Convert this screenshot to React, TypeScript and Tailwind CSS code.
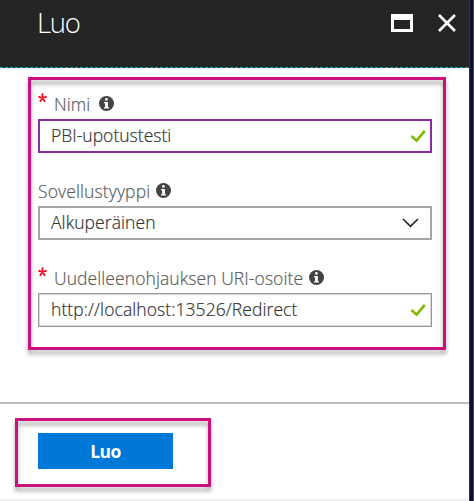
import React from "react";

function Info() {
  return (
    <svg className="block h-[15px] w-[15px] shrink-0" viewBox="0 0 15 15">
      <circle cx="7.5" cy="7.5" r="7.5" fill="#444444" />
      <circle cx="7.4" cy="3.4" r="1.4" fill="#fff" />
      <path d="M5 6h3.9v5.2H10v1.3H5v-1.3h1.1V7.3H5z" fill="#fff" />
    </svg>
  );
}

function Check() {
  return (
    <svg className="block h-[14px] w-[16px] shrink-0" viewBox="0 0 16 14">
      <path d="M1.4 7L6.6 11.6L14.8 1.8" fill="none" stroke="#7fba00" strokeWidth="2.6" />
    </svg>
  );
}

function Star() {
  return (
    <svg className="block h-[10px] w-[9px] shrink-0" viewBox="0 0 9 10">
      <path d="M4.5 0.2V5M0.3 3.6L4.5 5L8.7 3.6M1.9 8.7L4.5 5L7.1 8.7" fill="none" stroke="#e81123" strokeWidth="1.8" />
    </svg>
  );
}

export default function App() {
  return (
    <div className="relative flex h-[501px] w-[474px] overflow-hidden bg-white font-['Open_Sans','Noto_Sans',sans-serif] text-[17.5px] leading-6">
      <div className="flex w-[469px] flex-col">
        <header className="flex h-[67px] shrink-0 items-start bg-[#252525] pl-[37px] text-white">
          <h1 className="mt-[4px] w-[353px] text-[27.5px] leading-[38px] font-light tracking-[-1.3px]">Luo</h1>
          <svg className="mt-[14px] mr-[25px] ml-[1px] block h-[18px] w-[22px]" viewBox="0 0 22 18">
            <path d="M0 0H22V18H0zM3 6V15H19V6z" fill="#fff" fillRule="evenodd" />
          </svg>
          <svg className="mt-[14px] block h-[18px] w-[18px]" viewBox="0 0 18 18">
            <path d="M1 1L17 17M17 1L1 17" stroke="#fff" strokeWidth="2.6" />
          </svg>
        </header>
        <div className="h-px shrink-0 bg-[repeating-linear-gradient(90deg,#159fd0_0_3px,#252525_3px_5px)]" />

        <main className="flex h-[334px] shrink-0 flex-col pl-[38px] font-light text-[#5c5c5c] [-webkit-text-stroke:0.2px]">
          <label className="mt-[24px] flex h-[24px]">
            <span className="pt-[1px]"><Star /></span>
            <span className="ml-[7px] w-[45px] tracking-[0.1px]">Nimi</span>
            <span className="pt-[4px]"><Info /></span>
          </label>
          <div className="mt-[3px] flex h-[34px] w-[394px] items-center justify-between border-2 border-[#8a2da5] pr-[4px] pl-[11px] text-[#333333]">
            <span className="-mt-[3px] tracking-[0.02px]">PBI-upotustesti</span>
            <Check />
          </div>
          <label className="mt-[26px] flex h-[24px]">
            <span className="w-[118px] tracking-[0.12px]">Sovellustyyppi</span>
            <span className="pt-[4px]"><Info /></span>
          </label>
          <div className="mt-[3px] flex h-[34px] w-[394px] items-center justify-between border-2 border-[#a6a6a6] pr-[11px] pl-[11px] text-[#333333]">
            <span className="-mt-[3px] tracking-[0.08px]">Alkuperäinen</span>
            <svg className="block h-[10px] w-[17px]" viewBox="0 0 17 10">
              <path d="M1 1L8.5 8.4L16 1" fill="none" stroke="#222" strokeWidth="1.6" />
            </svg>
          </div>
          <label className="mt-[26px] flex h-[24px]">
            <span className="pt-[1px]"><Star /></span>
            <span className="ml-[7px] w-[255px] tracking-[0.08px] whitespace-nowrap">Uudelleenohjauksen URI-osoite</span>
            <span className="pt-[4px]"><Info /></span>
          </label>
          <div className="mt-[3px] flex h-[34px] w-[394px] items-center justify-between border border-[#999999] pr-[5px] pl-[12px] text-[#333333] shadow-[inset_0_0_0_1px_#d8d8d8]">
            <span className="-mt-[3px] tracking-[0.08px]">http://localhost:13526/Redirect</span>
            <Check />
          </div>
        </main>

        <footer className="h-[99px] border-t-2 border-b-2 border-t-[#bbbbbb] border-b-[#f0f0f0] pt-[29px] pl-[38px]">
          <button className="block h-[36px] w-[135px] bg-[#0078d7] font-bold tracking-[-0.6px] text-white">Luo</button>
        </footer>
      </div>
      <div className="w-px bg-[#960a10]" />
      <div className="w-[3px] bg-[#0b1230]" />
      <div className="w-px bg-[#40455c]" />

      <div className="pointer-events-none absolute top-[77px] left-[28px] h-[273px] w-[418px] border-3 border-[#c9107c] drop-shadow-[0_4px_2px_rgba(0,0,0,0.35)]" />
      <div className="pointer-events-none absolute top-[418px] left-[15px] h-[69px] w-[196px] border-3 border-[#c9107c] drop-shadow-[0_4px_2px_rgba(0,0,0,0.35)]" />
    </div>
  );
}
